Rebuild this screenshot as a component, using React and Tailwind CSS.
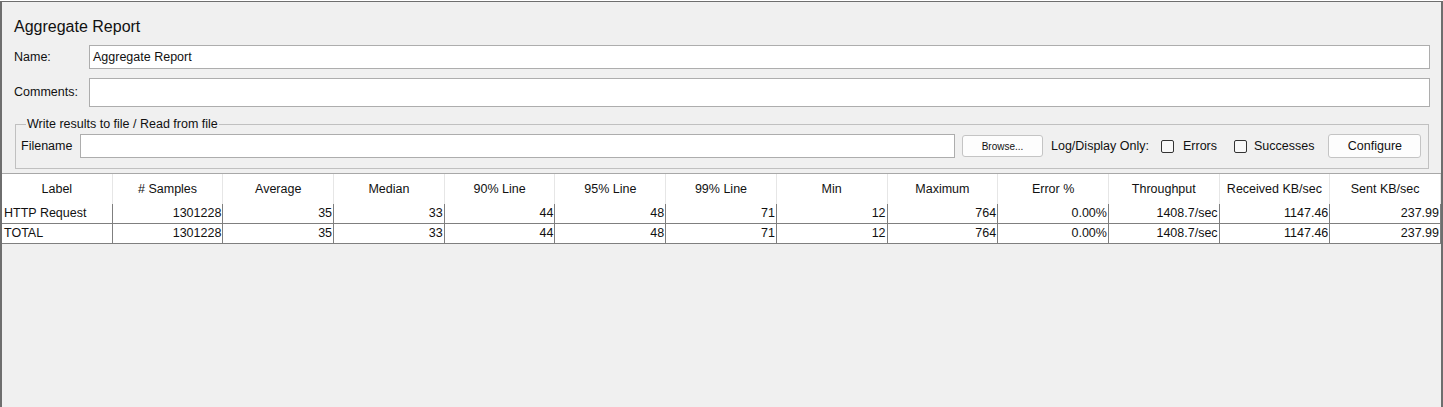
import React from "react";

const cols = ["Label", "# Samples", "Average", "Median", "90% Line", "95% Line", "99% Line", "Min", "Maximum", "Error %", "Throughput", "Received KB/sec", "Sent KB/sec"];
const rows = [
  ["HTTP Request", "1301228", "35", "33", "44", "48", "71", "12", "764", "0.00%", "1408.7/sec", "1147.46", "237.99"],
  ["TOTAL", "1301228", "35", "33", "44", "48", "71", "12", "764", "0.00%", "1408.7/sec", "1147.46", "237.99"],
];

function Check() {
  return <span className="inline-block w-[13px] h-[13px] border border-[#333] rounded-[2px] bg-[#f8f8f8]" />;
}

export default function App() {
  return (
    <div
      className="w-[1443px] h-[407px] overflow-hidden bg-white pt-[1px] text-[12.5px] text-[#111]"
      style={{ fontFamily: '"Liberation Sans", Arial, sans-serif' }}
    >
      <div className="h-[406px] bg-[#f0f0f0] border-t border-l-2 border-r-2 border-[#6e6e6e] flex flex-col">
        <div className="pl-[12px] pt-[15px] text-[16px] leading-[20px] text-[#111]">Aggregate Report</div>
        <div className="flex items-center mt-[8px] h-[24px]">
          <div className="w-[87px] pl-[12px]">Name:</div>
          <div className="w-[1341px] h-[24px] bg-white border border-[#adadad] flex items-center px-[3px]">Aggregate Report</div>
        </div>
        <div className="flex items-center mt-[9px] h-[29px]">
          <div className="w-[87px] pl-[12px]">Comments:</div>
          <div className="w-[1341px] h-[29px] bg-white border border-[#adadad]" />
        </div>
        <fieldset className="ml-[13px] w-[1414px] mt-[10px] h-[52px] border border-[#c0c0c0] px-[5px] pb-[8px]">
          <legend className="ml-[5px] px-[1px] leading-[14px]">Write results to file / Read from file</legend>
          <div className="flex items-center h-[24px] mt-[3px]">
            <div className="w-[59px]">Filename</div>
            <div className="w-[875px] h-[24px] bg-white border border-[#adadad]" />
            <button className="ml-[7px] w-[81px] h-[22px] bg-[#fdfdfd] border border-[#c4c4c4] rounded-[3px] text-[10px]">Browse...</button>
            <div className="ml-[8px]">Log/Display Only:</div>
            <div className="ml-[12px] flex items-center"><Check /></div>
            <div className="ml-[9px]">Errors</div>
            <div className="ml-[17px] flex items-center"><Check /></div>
            <div className="ml-[7px]">Successes</div>
            <button className="ml-[14px] w-[93px] h-[24px] bg-[#fdfdfd] border border-[#c4c4c4] rounded-[3px]">Configure</button>
          </div>
        </fieldset>
        <div className="mt-[4px] border-t border-[#a8a8a8] flex-1">
          <div className="grid grid-cols-[repeat(13,1fr)] bg-white h-[30px]">
            {cols.map((c, i) => (
              <div key={i} className="flex items-center justify-center border-r border-[#e6e6e6]">{c}</div>
            ))}
          </div>
          {rows.map((r, ri) => (
            <div key={ri} className="grid grid-cols-[repeat(13,1fr)] bg-white h-[20px] border-b border-[#7f7f7f]">
              {r.map((v, i) => (
                <div
                  key={i}
                  className={
                    "flex items-center border-r border-[#7f7f7f] " +
                    (i === 0 ? "justify-start pl-[2px]" : "justify-end pr-[1px]")
                  }
                >
                  {v}
                </div>
              ))}
            </div>
          ))}
        </div>
      </div>
    </div>
  );
}
